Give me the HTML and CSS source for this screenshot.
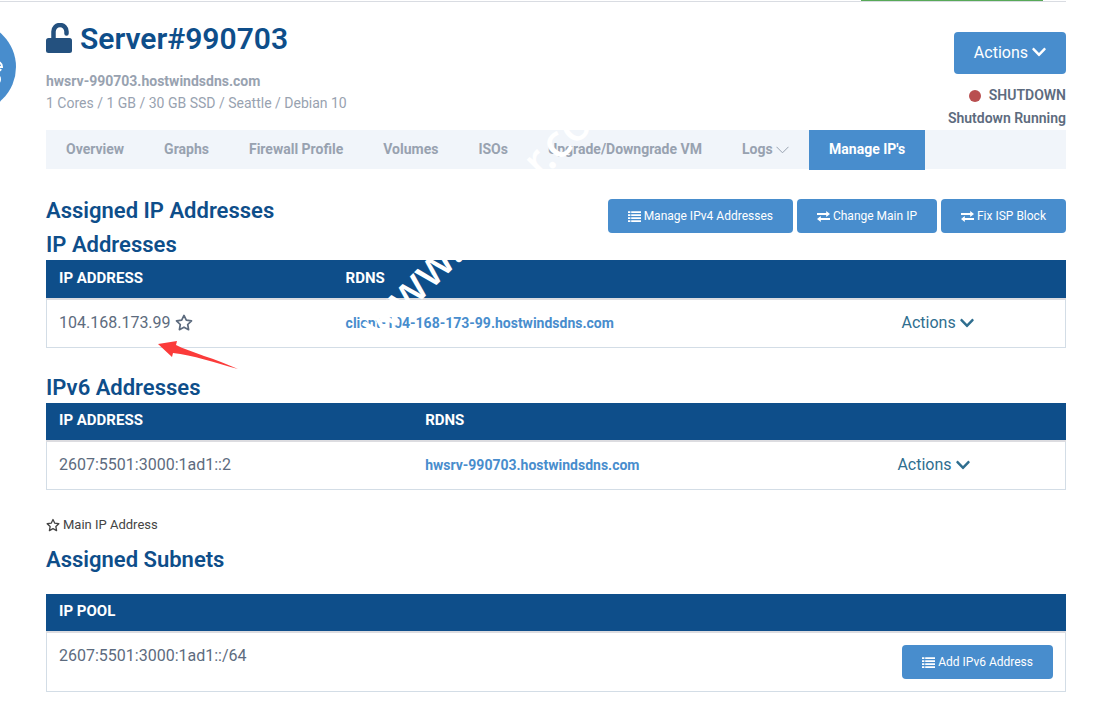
FILE: index.html
```html
<!DOCTYPE html>
<html lang="en">
<head>
    <meta charset="UTF-8">
    <meta name="viewport" content="width=device-width, initial-scale=1.0">
    <title>Server#990703 - Manage IP's</title>
    <link rel="stylesheet" href="styles.css">
</head>
<body>

<!-- Icons -->
<svg class="sprite" aria-hidden="true">
    <symbol id="chevron" viewBox="0 0 448 512">
        <path d="M207 381L13 187c-9-9-9-25 0-34l22-22c10-10 25-10 34 0l155 154 155-154c9-10 24-10 34 0l22 22c9 9 9 25 0 34L241 381c-9 10-25 10-34 0z"/>
    </symbol>
    <symbol id="star" viewBox="0 0 18 17">
        <path d="M9 1.4l2.3 4.8 5.2.7-3.8 3.6.9 5.2L9 13.2l-4.6 2.5.9-5.2L1.5 6.9l5.2-.7z" fill="none" stroke="currentColor" stroke-width="1.7" stroke-linejoin="round"/>
    </symbol>
    <symbol id="list" viewBox="0 0 13 11">
        <path d="M0 .2h2.400v1.800H0zM0 3.200h2.400V5H0zM0 6.200h2.400V8H0zM0 9.200h2.400V11H0zM3.200 .2H13V2H3.200zM3.200 3.200H13V5H3.200zM3.200 6.200H13V8H3.200zM3.200 9.200H13V11H3.200z"/>
    </symbol>
    <symbol id="exchange" viewBox="0 0 13 11">
        <path d="M0 2.1h9.2V0L13 3 9.2 6V3.900H0zM13 7.100H3.800V5L0 8l3.800 3V8.900H13z"/>
    </symbol>
</svg>

<div class="top-line"><span class="top-button"></span></div>

<button class="chat-button" aria-label="Chat">
    <svg width="90" height="90" viewBox="0 0 90 90" fill="none" stroke="#fff" stroke-width="2">
        <path d="M70 45h6c0-4-3-6-6-4M70 48c2 1 4 1 5-1M71 54c4-1 4 7 0 7"/>
    </svg>
</button>

<div class="container">

    <header class="server-header">
        <div class="server-info">
            <h1>
                <svg class="lock" viewBox="0 0 27 32">
                    <path d="M7.500 17V8.500a6.500 6.500 0 0 1 13 0V10.500" fill="none" stroke="currentColor" stroke-width="4.500" stroke-linecap="round"/>
                    <rect x="0" y="15" width="26" height="15" rx="2.500" fill="currentColor"/>
                </svg>
                Server#990703
            </h1>
            <p class="hostname">hwsrv-990703.hostwindsdns.com</p>
            <p>1 Cores / 1 GB / 30 GB SSD / Seattle / Debian 10</p>
        </div>
        <div class="server-status">
            <button class="btn btn-large">Actions <svg class="icon-chevron"><use href="#chevron"/></svg></button>
            <p><span class="dot"></span>SHUTDOWN</p>
            <p>Shutdown Running</p>
        </div>
    </header>

    <nav class="tabs">
        <a href="#">Overview</a>
        <a href="#">Graphs</a>
        <a href="#">Firewall Profile</a>
        <a href="#">Volumes</a>
        <a href="#">ISOs</a>
        <a href="#">Upgrade/Downgrade VM</a>
        <a href="#">Logs <svg class="icon-thin" viewBox="0 0 13 8"><path d="M.5 .8l6 6 6-6" fill="none" stroke="currentColor"/></svg></a>
        <a href="#" class="active">Manage IP's</a>
    </nav>

    <div class="section-head">
        <h2>Assigned IP Addresses</h2>
        <div class="buttons">
            <button class="btn"><svg class="icon"><use href="#list"/></svg>Manage IPv4 Addresses</button>
            <button class="btn"><svg class="icon"><use href="#exchange"/></svg>Change Main IP</button>
            <button class="btn"><svg class="icon"><use href="#exchange"/></svg>Fix ISP Block</button>
        </div>
    </div>

    <h2 class="table-title">IP Addresses</h2>
    <table class="ipv4">
        <thead>
            <tr><th class="col-ip">IP ADDRESS</th><th class="col-rdns">RDNS</th><th></th></tr>
        </thead>
        <tbody>
            <tr>
                <td>104.168.173.99 <svg class="icon-star"><use href="#star"/></svg></td>
                <td><a href="#">client-104-168-173-99.hostwindsdns.com</a></td>
                <td><button class="row-actions">Actions <svg class="icon-chevron"><use href="#chevron"/></svg></button></td>
            </tr>
        </tbody>
    </table>

    <h2 class="table-title">IPv6 Addresses</h2>
    <table class="ipv6">
        <thead>
            <tr><th class="col-ip">IP ADDRESS</th><th class="col-rdns">RDNS</th><th></th></tr>
        </thead>
        <tbody>
            <tr>
                <td>2607:5501:3000:1ad1::2</td>
                <td><a href="#">hwsrv-990703.hostwindsdns.com</a></td>
                <td><button class="row-actions">Actions <svg class="icon-chevron"><use href="#chevron"/></svg></button></td>
            </tr>
        </tbody>
    </table>

    <p class="legend"><svg class="icon-star-small"><use href="#star"/></svg>Main IP Address</p>

    <h2>Assigned Subnets</h2>
    <table class="subnets">
        <thead>
            <tr><th>IP POOL</th><th></th></tr>
        </thead>
        <tbody>
            <tr>
                <td>2607:5501:3000:1ad1::/64</td>
                <td class="right"><button class="btn"><svg class="icon"><use href="#list"/></svg>Add IPv6 Address</button></td>
            </tr>
        </tbody>
    </table>

</div>

<!-- Watermark and pointer over the page -->
<div class="watermark"><span>www.</span><span>r.co</span></div>
<svg class="arrow" width="80" height="30" viewBox="0 0 80 30"><path d="M0 4L19 1l-1 4c14 7 40 14 62 24C58 23 34 15 15 13l-1 4z" fill="#fb3b3a"/></svg>

</body>
</html>
```

FILE: styles.css
```css
body {
    font-family: Roboto, "Liberation Sans", sans-serif;
    font-size: 14px;
    color: #5d6b7e;
    background-color: #fff;
    margin: 0;
    position: relative;
    overflow-x: hidden;
}

h1, h2, p {
    margin: 0;
}

button {
    font-family: inherit;
    border: none;
    cursor: pointer;
}

a {
    color: #488dcd;
    font-weight: bold;
    text-decoration: none;
}

svg {
    fill: currentColor;
}

.sprite {
    position: absolute;
    width: 0;
    height: 0;
}

.top-line {
    display: flex;
    justify-content: flex-end;
    height: 1px;
    margin-right: 33px;
    padding-right: 23px;
    border-bottom: 1px solid #d9dce2;
}

.top-button {
    width: 182px;
    height: 1px;
    background-color: #57a957;
}

.chat-button {
    position: absolute;
    left: -74px;
    top: 22px;
    width: 90px;
    height: 90px;
    padding: 0;
    border-radius: 50%;
    background-color: #488dcd;
}

.chat-button svg {
    display: block;
    fill: none;
}

.container {
    padding: 0 33px 28px 46px;
}

/* Header */
.server-header {
    display: flex;
    justify-content: space-between;
}

.server-info {
    padding-top: 18px;
    line-height: 22px;
    color: #98a2b0;
}

h1 {
    display: flex;
    align-items: center;
    gap: 7px;
    margin-bottom: 12px;
    font-size: 30px;
    line-height: 38px;
    font-weight: 600;
    color: #0e4e8a;
}

.lock {
    width: 27px;
    height: 32px;
    color: #24517f;
}

.hostname {
    font-weight: bold;
}

.server-status {
    padding-top: 30px;
    line-height: 23px;
    text-align: right;
    font-weight: 600;
}

.dot {
    display: inline-block;
    width: 12px;
    height: 12px;
    margin-right: 8px;
    border-radius: 50%;
    background-color: #b94f50;
    vertical-align: -2px;
}

.btn {
    display: inline-flex;
    align-items: center;
    gap: 3px;
    height: 34px;
    padding: 0 20px;
    border-radius: 4px;
    font-size: 12px;
    font-weight: normal;
    color: #fff;
    background-color: #488dcd;
}

.btn-large {
    gap: 4px;
    height: 42px;
    padding-bottom: 2px;
    margin-bottom: 10px;
    font-size: 16px;
}

.icon {
    width: 13px;
    height: 11px;
}

.icon-chevron {
    width: 14px;
    height: 16px;
}

/* Tabs */
.tabs {
    display: flex;
    height: 39px;
    line-height: 39px;
    background-color: #f1f5fa;
}

.tabs a {
    padding: 0 20px;
    color: #98a2b0;
}

.tabs .active {
    height: 40px;
    color: #fff;
    background-color: #488dcd;
}

.icon-thin {
    width: 13px;
    height: 8px;
}

/* Sections */
.section-head {
    display: flex;
    justify-content: space-between;
    margin-top: 30px;
}

.buttons {
    display: flex;
    gap: 4px;
}

h2 {
    font-size: 22px;
    line-height: 24px;
    font-weight: 600;
    color: #0e4e8a;
}

.table-title {
    margin-bottom: 3px;
}

/* Tables */
table {
    width: 100%;
    margin-bottom: 28px;
    border-spacing: 0;
    table-layout: fixed;
    font-size: 16px;
    line-height: 21px;
}

th {
    height: 35px;
    padding: 0 13px 2px;
    font-size: 15px;
    text-align: left;
    color: #fff;
    background-color: #0e4e8a;
    border-bottom: 2px solid #dcdce0;
}

td {
    height: 45px;
    padding: 0 13px 2px;
    border-bottom: 1px solid #d3dde6;
}

td:first-child {
    padding-left: 12px;
    border-left: 1px solid #d3dde6;
}

td:last-child {
    padding-right: 12px;
    border-right: 1px solid #d3dde6;
}

td a {
    font-size: 14px;
}

.ipv4 th {
    height: 36px;
}

.ipv4 .col-ip {
    width: 28.1%;
}

.ipv4 .col-rdns {
    width: 54.5%;
}

.ipv6 .col-ip {
    width: 35.9%;
}

.ipv6 .col-rdns {
    width: 46.3%;
}

.col-ip, .col-rdns {
    box-sizing: border-box;
}

.row-actions {
    display: flex;
    align-items: center;
    gap: 4px;
    padding: 0;
    font-size: 16px;
    color: #2f6e8f;
    background: none;
}

.icon-star {
    width: 18px;
    height: 17px;
    vertical-align: -3px;
}

.legend {
    display: flex;
    align-items: center;
    gap: 3px;
    margin: -3px 0 13px;
    line-height: 20px;
    font-size: 13px;
    color: #444;
}

.icon-star-small {
    width: 14px;
    height: 14px;
}

.subnets {
    margin: 22px 0 0;
}

.subnets td {
    height: 34px;
    padding-top: 12px;
    padding-bottom: 12px;
    vertical-align: top;
}

.right {
    text-align: right;
}

.right .btn {
    vertical-align: top;
}

/* Overlays */
.watermark {
    position: absolute;
    left: 366px;
    top: 310px;
    display: flex;
    gap: 108px;
    font-family: "Noto Sans", sans-serif;
    font-size: 46px;
    line-height: 40px;
    font-weight: 500;
    color: #fff;
    transform: rotate(-45deg);
    transform-origin: 0 50%;
    pointer-events: none;
}

.arrow {
    position: absolute;
    left: 158px;
    top: 340px;
}
```
